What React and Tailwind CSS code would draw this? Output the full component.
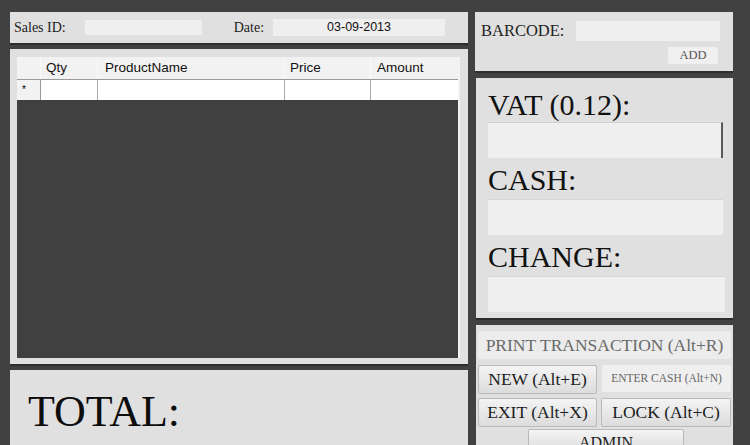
import React from 'react';

const serif = { fontFamily: '"Liberation Serif", "DejaVu Serif", serif' };
const sans = { fontFamily: '"Liberation Sans", Arial, sans-serif' };

const Panel = ({ className = '', children }) => (
  <div className={`shrink-0 bg-[#e0e0e0] border-b-2 border-[#2e2e2e] ${className}`}>{children}</div>
);

const Btn = ({ className = '', children }) => (
  <div
    className={`flex items-center justify-center border border-[#b9b9b9] rounded-[2px] bg-gradient-to-b from-[#f4f4f4] to-[#dcdcdc] text-[#1c1c1c] ${className}`}
  >
    {children}
  </div>
);

export default function App() {
  return (
    <div className="w-[750px] h-[445px] overflow-hidden bg-[#414141] flex gap-[7px] pl-[10px] pt-[12px]" style={serif}>
      {/* left column */}
      <div className="w-[458px] flex flex-col gap-[4px] shrink-0">
        <Panel className="h-[33px] flex items-center pl-[4px]">
          <span className="text-[14px] text-[#222]">Sales ID:</span>
          <div className="ml-[19px] w-[117px] h-[15px] bg-[#efefef]" />
          <span className="ml-[32px] text-[14px] text-[#222]">Date:</span>
          <div className="ml-[9px] w-[172px] h-[17px] bg-[#efefef] flex items-center justify-center text-[12.5px] text-[#111]" style={sans}>
            03-09-2013
          </div>
        </Panel>

        <Panel className="h-[317px] pt-[8px] pl-[7px] pr-[8px] pb-[6px]">
          <div className="h-full bg-[#404040] border-r-2 border-[#f3f3f3]" style={sans}>
            <div className="grid grid-cols-[24px_57px_187px_86px_87px] h-[22px] bg-[#f2f2f2] text-[13.5px] text-[#111]">
              <div className="border-r border-[#fafafa]" />
              <div className="pl-[5px] leading-[22px] border-r border-[#fafafa]">Qty</div>
              <div className="pl-[7px] leading-[22px] border-r border-[#fafafa]">ProductName</div>
              <div className="pl-[5px] leading-[22px] border-r border-[#fafafa]">Price</div>
              <div className="pl-[6px] leading-[22px]">Amount</div>
            </div>
            <div className="grid grid-cols-[24px_57px_187px_86px_87px] h-[21px] bg-white border-t border-[#9a9a9a]">
              <div className="bg-[#f2f2f2] border-r border-[#9a9a9a] text-[10px] pl-[5px] leading-[20px]">*</div>
              <div className="border-r border-[#aaaaaa]" />
              <div className="border-r border-[#aaaaaa]" />
              <div className="border-r border-[#aaaaaa]" />
              <div />
            </div>
          </div>
        </Panel>

        <div className="flex-1 bg-[#e0e0e0] pl-[18px] pt-[20px]">
          <span className="text-[44px] leading-[44px] text-[#0d0d0d]">TOTAL:</span>
        </div>
      </div>

      {/* right column */}
      <div className="w-[258px] flex flex-col gap-[5px] shrink-0">
        <Panel className="h-[61px] pl-[6px] pr-[13px] pt-[9px] flex flex-col">
          <div className="flex items-center h-[20px]">
            <span className="text-[16.5px] text-[#222]">BARCODE:</span>
            <div className="ml-auto w-[144px] h-[20px] bg-[#efefef]" />
          </div>
          <div className="flex justify-end mt-[6px] pr-[2px]">
            <div className="w-[50px] h-[17px] bg-[#f0f0f0] rounded-[2px] flex items-center justify-center text-[12.5px] text-[#555]">ADD</div>
          </div>
        </Panel>

        <Panel className="h-[242px] ml-[1px] pl-[12px] pr-[10px] pt-[10px]">
          <div className="h-[34px] text-[30px] leading-[34px] text-[#111]">VAT (0.12):</div>
          <div className="h-[36px] bg-[#efefef] border-t border-[#d0d0d0] border-r-2 border-r-[#5a5a5a]" />
          <div className="h-[41px] pt-[3px] text-[30px] leading-[38px] text-[#111]">CASH:</div>
          <div className="h-[36px] bg-[#efefef] border-t border-[#d6d6d6]" />
          <div className="h-[41px] pt-[3px] text-[30px] leading-[38px] text-[#111]">CHANGE:</div>
          <div className="h-[36px] bg-[#efefef] mr-[-2px] border-t border-[#d6d6d6]" />
        </Panel>

        <div className="flex-1 ml-[1px] bg-[#e0e0e0] pl-[2px] pr-[2px] pt-[6px] flex flex-col">
          <div className="shrink-0 h-[28px] bg-[#ececec] flex items-center justify-center text-[17.5px] text-[#6a6a6a] rounded-[2px]">
            PRINT TRANSACTION (Alt+R)
          </div>
          <div className="shrink-0 flex mt-[6px] gap-[5px]">
            <Btn className="w-[119px] h-[29px] text-[17.5px]">NEW (Alt+E)</Btn>
            <div className="flex-1 h-[27px] bg-[#efefef] flex items-center justify-center text-[11.5px] text-[#666] rounded-[2px]">
              ENTER CASH (Alt+N)
            </div>
          </div>
          <div className="shrink-0 flex mt-[4px] gap-[4px]">
            <Btn className="w-[119px] h-[29px] text-[17.5px]">EXIT (Alt+X)</Btn>
            <Btn className="flex-1 h-[29px] text-[17.5px]">LOCK (Alt+C)</Btn>
          </div>
          <div className="shrink-0 flex justify-center mt-[2px] pl-[3px]">
            <Btn className="w-[156px] h-[24px] text-[16px] items-start pt-[1px]">ADMIN</Btn>
          </div>
        </div>
      </div>
    </div>
  );
}
